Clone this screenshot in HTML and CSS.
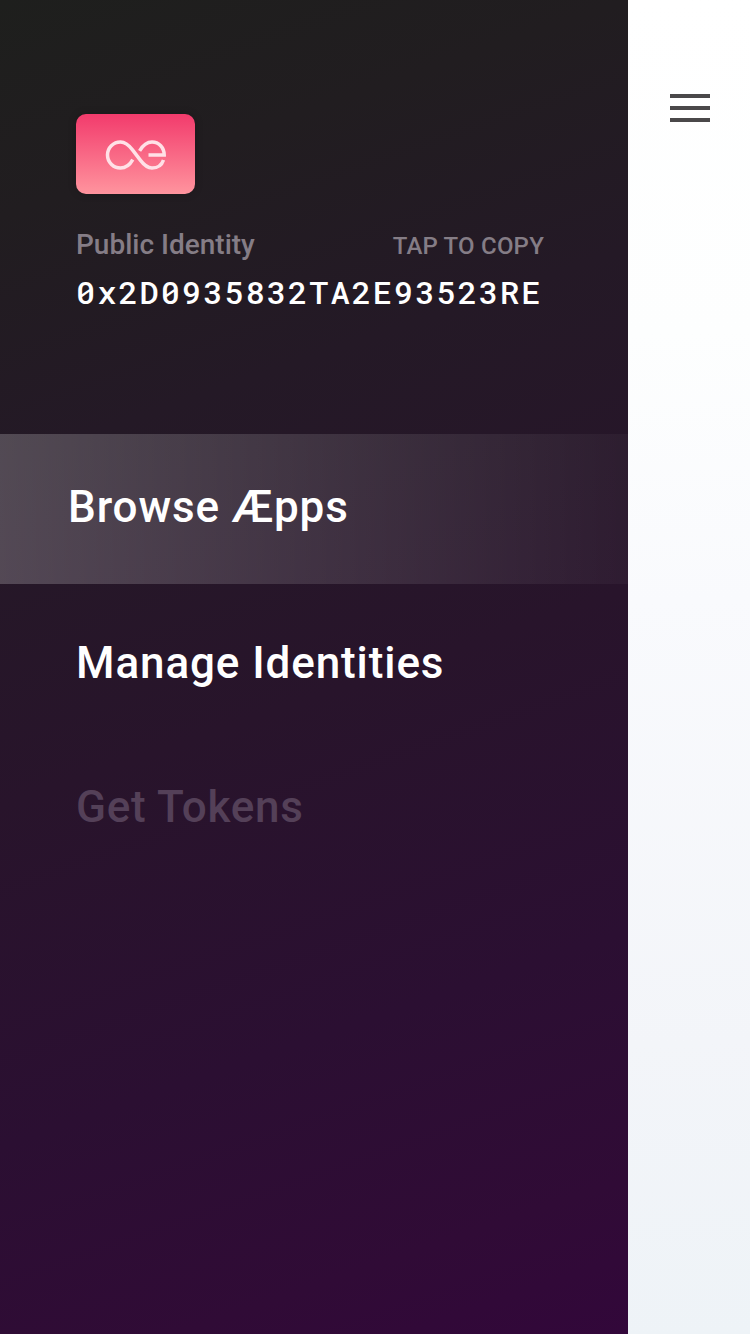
FILE: index.html
```html
<!DOCTYPE html>
<html lang="en">
<head>
<meta charset="utf-8">
<title>Menu</title>
<link rel="stylesheet" href="styles.css">
</head>
<body>
<div class="screen">
  <aside class="drawer">
    <header class="identity">
      <div class="badge">
        <svg class="logo" viewBox="0 0 64 34" fill="none" stroke="currentColor" stroke-width="3.500">
          <path d="M28.800 21.600C26 26.600 21.800 30 16.500 30A13 13 0 0 1 16.500 4C21.500 4 25 7.300 28.500 11.900L36.500 22.400C40 27 43.200 30 48 30C53.700 30 57.900 26.800 59.500 22"/>
          <path d="M35.600 12.800C38.800 7.500 42.600 4 48 4C55 4 60.200 9.600 60.200 17H44.500"/>
        </svg>
      </div>
      <div class="labels">
        <span class="title">Public Identity</span>
        <span class="copy">TAP TO COPY</span>
      </div>
      <div class="address">0x2D0935832TA2E93523RE</div>
    </header>
    <nav class="menu">
      <a class="item active">Browse Æpps</a>
      <a class="item">Manage Identities</a>
      <a class="item disabled">Get Tokens</a>
    </nav>
  </aside>
  <main class="page">
    <div class="burger"><i></i><i></i><i></i></div>
  </main>
</div>
</body>
</html>
```
FILE: styles.css
```css
* { box-sizing: border-box; }
body { margin: 0; font-family: Roboto, sans-serif; font-weight: 500; }
.screen { display: flex; width: 750px; height: 1334px; overflow: hidden; }
.drawer {
  width: 628px;
  background: linear-gradient(161deg, #1e1f1d 0%, #211d20 14%, #241926 30%, #28142b 52%, #2b0f32 74%, #300b36 90%, #32073a 100%);
}
.identity { height: 434px; padding: 114px 84px 0 76px; }
.badge {
  display: flex;
  align-items: center;
  justify-content: center;
  width: 119px;
  height: 79.5px;
  border-radius: 10px;
  background: linear-gradient(#f23b6c, #ff949e);
  box-shadow: 0 0 8px rgba(0, 0, 0, .2);
}
.logo { width: 64px; height: 34px; margin: 2px 0 0; color: #ffe1e7; }
.labels {
  display: flex;
  justify-content: space-between;
  align-items: baseline;
  margin-top: 35.500px;
  line-height: 32px;
  color: #857d86;
}
.title { font-size: 28px; }
.copy { font-size: 24px; letter-spacing: .2px; }
.address {
  margin-top: 11px;
  font: 500 32px/38px "Roboto Mono", "DejaVu Sans Mono", monospace;
  letter-spacing: 2px;
  white-space: nowrap;
  color: #fff;
}
.item {
  display: block;
  padding-left: 76px;
  font-size: 44px;
  line-height: 52px;
  letter-spacing: .9px;
  color: #fff;
  margin-bottom: 92px;
}
.active {
  height: 150px;
  margin-bottom: 53px;
  padding: 47px 0 0 68px;
  background: linear-gradient(90deg, rgba(255, 255, 255, .21), rgba(255, 255, 255, .03));
}
.disabled { color: #544058; letter-spacing: .75px; }
.page {
  flex: 1;
  padding: 94px 40px 0 42px;
  background: linear-gradient(178deg, #fff 0%, #fdfefe 25%, #f9fafd 45%, #f3f5f9 78%, #eef3f7 100%);
}
.burger { display: flex; flex-direction: column; gap: 8px; width: 40px; }
.burger i { height: 4px; background: #4a484a; }
```
